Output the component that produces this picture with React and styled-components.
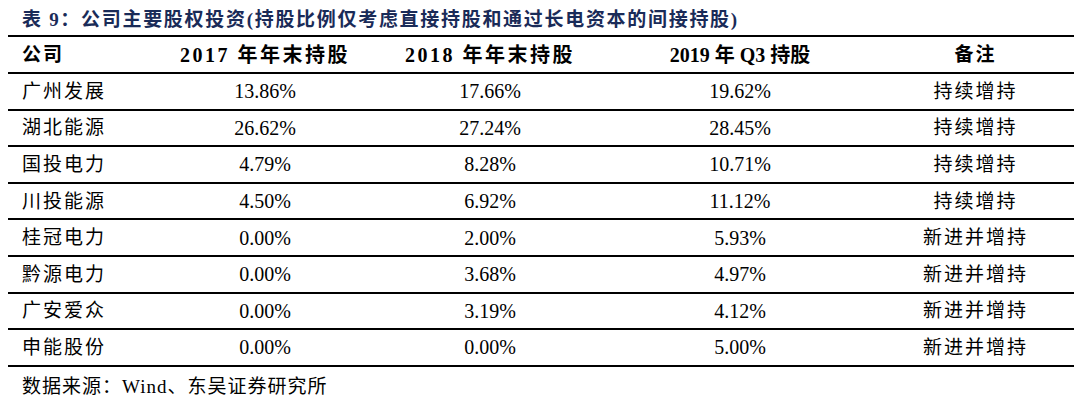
import React from "react";
import styled, { createGlobalStyle } from "styled-components";

const Global = createGlobalStyle`
  html, body { margin: 0; padding: 0; background: #fff; }
  body { width: 1080px; height: 404px; overflow: hidden; }
`;

const FONT = `"Liberation Serif", "Noto Sans CJK SC", serif`;

const Page = styled.div`
  width: 1080px;
  padding: 0 6px 0 8px;
  box-sizing: border-box;
  font-family: ${FONT};
  color: #000;
`;

const Title = styled.div`
  height: 35px;
  display: flex;
  align-items: center;
  padding-left: 14px;
  font-size: 19px;
  font-weight: 700;
  letter-spacing: 1.7px;
  color: #1a2b58;
  white-space: nowrap;
`;

const Table = styled.div`
  border-top: 2px solid #000;
`;

const Row = styled.div`
  display: grid;
  grid-template-columns: 145px 224px 226px 274px 1fr;
  height: ${(p) => (p.$header ? "37px" : "36.6px")};
  box-sizing: border-box;
  border-bottom: 2px solid #000;
  align-items: center;
  font-weight: ${(p) => (p.$header ? 700 : 400)};
`;

const Cell = styled.div`
  text-align: ${(p) => (p.$left ? "left" : "center")};
  padding-left: ${(p) => (p.$left ? "14px" : "0")};
  letter-spacing: ${(p) => (p.$cjk ? "2px" : p.$spaced ? "2.5px" : "0")};
  font-size: ${(p) => (p.$cjk ? "19px" : "20px")};
  white-space: nowrap;
  line-height: 1;
`;

const Footer = styled.div`
  height: 36px;
  display: flex;
  align-items: center;
  padding-left: 14px;
  font-size: 19px;
  letter-spacing: 1px;
`;

const rows = [
  ["广州发展", "13.86%", "17.66%", "19.62%", "持续增持"],
  ["湖北能源", "26.62%", "27.24%", "28.45%", "持续增持"],
  ["国投电力", "4.79%", "8.28%", "10.71%", "持续增持"],
  ["川投能源", "4.50%", "6.92%", "11.12%", "持续增持"],
  ["桂冠电力", "0.00%", "2.00%", "5.93%", "新进并增持"],
  ["黔源电力", "0.00%", "3.68%", "4.97%", "新进并增持"],
  ["广安爱众", "0.00%", "3.19%", "4.12%", "新进并增持"],
  ["申能股份", "0.00%", "0.00%", "5.00%", "新进并增持"],
];

export default function App() {
  return (
    <Page>
      <Global />
      <Title>表 9：公司主要股权投资(持股比例仅考虑直接持股和通过长电资本的间接持股)</Title>
      <Table>
        <Row $header>
          <Cell $left $cjk>公司</Cell>
          <Cell $spaced>2017 年年末持股</Cell>
          <Cell $spaced>2018 年年末持股</Cell>
          <Cell>2019 年 Q3 持股</Cell>
          <Cell $cjk>备注</Cell>
        </Row>
        {rows.map((r) => (
          <Row key={r[0]}>
            <Cell $left $cjk>{r[0]}</Cell>
            <Cell>{r[1]}</Cell>
            <Cell>{r[2]}</Cell>
            <Cell>{r[3]}</Cell>
            <Cell $cjk>{r[4]}</Cell>
          </Row>
        ))}
      </Table>
      <Footer>数据来源：Wind、东吴证券研究所</Footer>
    </Page>
  );
}
